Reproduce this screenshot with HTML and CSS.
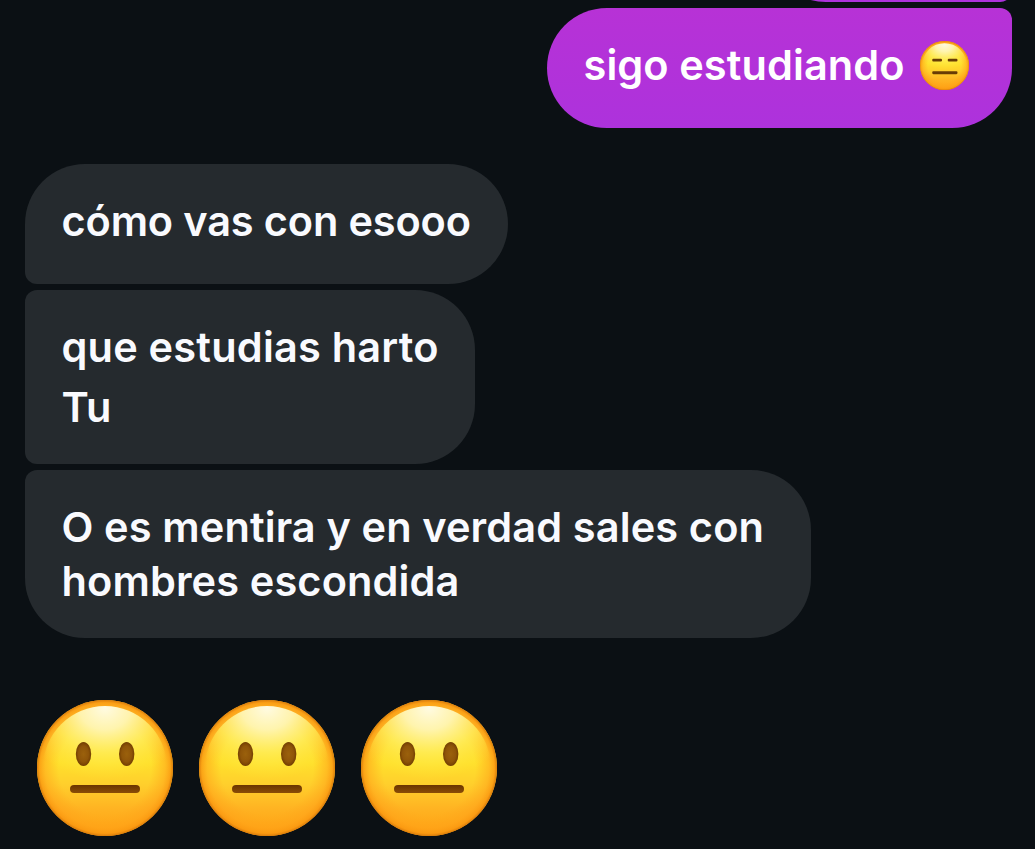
FILE: index.html
```html
<!DOCTYPE html>
<html lang="es">
<head>
  <meta charset="UTF-8" />
  <meta name="viewport" content="width=device-width, initial-scale=1.0"/>
  <title>Chat</title>
  <link rel="stylesheet" href="styles.css">
</head>
<body>
  <!-- Shared emoji artwork -->
  <svg class="defs" width="0" height="0" aria-hidden="true">
    <defs>
      <linearGradient id="face" x1="0" y1="0" x2="0" y2="1">
        <stop offset="0" stop-color="#ffbd2a"/>
        <stop offset="0.25" stop-color="#ffd83a"/>
        <stop offset="0.46" stop-color="#ffe02c"/>
        <stop offset="0.62" stop-color="#ffcf2c"/>
        <stop offset="0.8" stop-color="#ffb322"/>
        <stop offset="1" stop-color="#ffa312"/>
      </linearGradient>
      <radialGradient id="edge">
        <stop offset="0.68" stop-color="#ffa31a" stop-opacity="0"/>
        <stop offset="0.88" stop-color="#ffa018" stop-opacity="0.5"/>
        <stop offset="0.96" stop-color="#fa9710" stop-opacity="0.8"/>
        <stop offset="1" stop-color="#d87a0a"/>
      </radialGradient>
      <radialGradient id="shine" gradientUnits="userSpaceOnUse" cx="0" cy="0" r="1" gradientTransform="translate(68 8) scale(86 72)">
        <stop offset="0" stop-color="#fffbe2"/>
        <stop offset="0.3" stop-color="#fff6b4" stop-opacity="0.95"/>
        <stop offset="0.62" stop-color="#fff05c" stop-opacity="0.72"/>
        <stop offset="1" stop-color="#ffe933" stop-opacity="0"/>
      </radialGradient>
      <radialGradient id="eye">
        <stop offset="0" stop-color="#9b610c"/>
        <stop offset="0.65" stop-color="#8f5509"/>
        <stop offset="1" stop-color="#733f02"/>
      </radialGradient>
      <linearGradient id="mouth" x1="0" y1="0" x2="0" y2="1">
        <stop offset="0" stop-color="#6b3400"/>
        <stop offset="1" stop-color="#8a4c06"/>
      </linearGradient>
      <g id="head">
        <circle cx="68" cy="68" r="68" fill="url(#face)"/>
        <circle cx="68" cy="68" r="68" fill="url(#edge)"/>
        <circle cx="68" cy="68" r="62" fill="url(#shine)"/>
      </g>
      <g id="neutral">
        <use href="#head"/>
        <ellipse cx="46.5" cy="54" rx="7.7" ry="12" fill="url(#eye)"/>
        <ellipse cx="89.7" cy="54" rx="7.7" ry="12" fill="url(#eye)"/>
        <rect x="33" y="85" width="70" height="8" rx="4" fill="url(#mouth)"/>
      </g>
      <g id="expressionless">
        <use href="#head"/>
        <rect x="34" y="49" width="27" height="8" rx="3" fill="#683c05"/>
        <rect x="77" y="49" width="27" height="8" rx="3" fill="#683c05"/>
        <rect x="34" y="84" width="70" height="8" rx="3" fill="#683c05"/>
      </g>
    </defs>
  </svg>

  <main class="chat">
    <div class="message sent previous"></div>
    <div class="message sent last">
      <span>sigo estudiando</span>
      <svg class="emoji-small" viewBox="0 0 136 136" role="img" aria-label="😑"><use href="#expressionless"/></svg>
    </div>

    <div class="message received first">cómo vas con esooo</div>
    <div class="message received middle">que estudias harto<br>Tu</div>
    <div class="message received end">O es mentira y en verdad sales con<br>hombres escondida</div>

    <div class="emojis">
      <svg class="emoji" viewBox="0 0 136 136" role="img" aria-label="😐"><use href="#neutral"/></svg>
      <svg class="emoji" viewBox="0 0 136 136" role="img" aria-label="😐"><use href="#neutral"/></svg>
      <svg class="emoji" viewBox="0 0 136 136" role="img" aria-label="😐"><use href="#neutral"/></svg>
    </div>
  </main>
</body>
</html>
```
FILE: styles.css
```css
* {
  margin: 0;
  padding: 0;
  box-sizing: border-box;
}

body {
  height: 100vh;
  background: #0b1014;
  overflow: hidden;
  color: #f9fafe;
  font-family: Inter, sans-serif;
  font-size: 41.5px;
  font-weight: 590;
  line-height: 54px;
}

.defs {
  display: block;
}

.chat {
  display: flex;
  flex-direction: column;
  align-items: flex-start;
  gap: 6px;
  padding: 0 23px 0 25px;
}

.message {
  border-radius: 60px;
  padding: 30px 36.5px;
  white-space: nowrap;
}

.sent {
  align-self: flex-end;
  background: linear-gradient(#b732d6, #ad32dc);
  color: #fff;
}

/* only the bottom edge of the earlier bubble is in view */
.previous {
  width: 246px;
  height: 120px;
  margin-top: -118px;
  border-radius: 60px 12px 12px 60px;
}

.last {
  display: flex;
  justify-content: space-between;
  width: 465px;
  height: 120px;
  padding-right: 43px;
  border-radius: 60px 12px 60px 60px;
  letter-spacing: 0.08px;
}

.emoji-small {
  width: 49px;
  height: 49px;
  margin-top: 3px;
}

.received {
  background: #252a2e;
}

.first {
  width: 483px;
  height: 120px;
  margin-top: 30px;
  border-radius: 60px 60px 60px 12px;
  letter-spacing: -0.15px;
}

.middle {
  width: 450px;
  height: 174px;
  padding-top: 27px;
  border-radius: 12px 60px 60px 12px;
  letter-spacing: 0.2px;
  line-height: 60px;
}

.end {
  width: 786px;
  border-radius: 12px 60px 60px 60px;
  letter-spacing: 0.12px;
}

.emojis {
  display: flex;
  gap: 26px;
  margin-top: 56px;
  padding-left: 12px;
}

.emoji {
  display: block;
  width: 136px;
  height: 136px;
}
```
